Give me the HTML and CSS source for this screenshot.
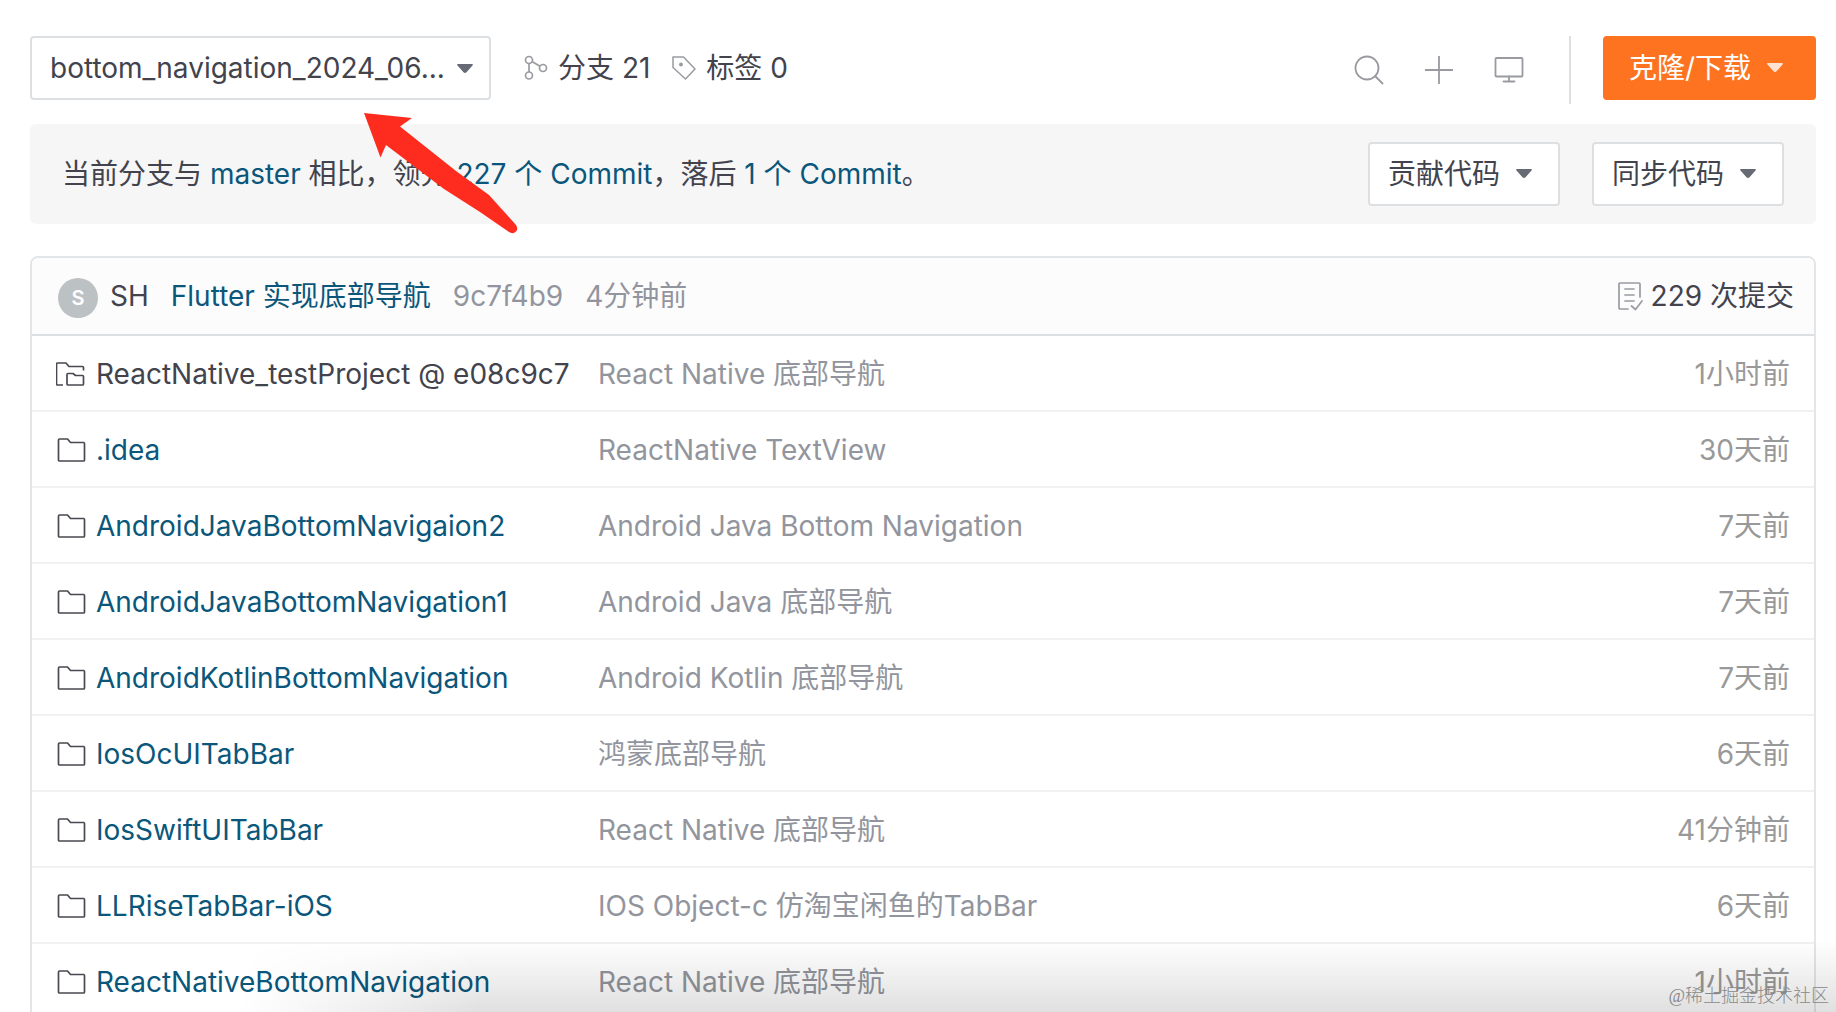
FILE: index.html
```html
<!DOCTYPE html>
<html lang="zh-CN">
<head>
  <meta charset="UTF-8" />
  <title>bottom_navigation</title>
  <meta name="viewport" content="width=device-width, initial-scale=1.0" />
  <link rel="stylesheet" href="styles.css">
</head>
<body>
  <svg class="sprite" aria-hidden="true">
    <symbol id="folder" viewBox="0 0 30 28">
      <path d="M2.500 4q0-1 1-1h8l3 3.500h13q1 0 1 1v16.500q0 1-1 1h-24q-1 0-1-1z" fill="none" stroke="#474a52" stroke-width="1.700" stroke-linejoin="round" />
    </symbol>
    <symbol id="caret" viewBox="0 0 16 10">
      <path d="M1 0h14q1.500.3.5 1.600l-6 6.700q-1.500 1.400-3 0l-6-6.700q-1-1.300.5-1.600z" fill="currentColor" />
    </symbol>
  </svg>

  <main class="page">
    <header class="toolbar">
      <div class="branch">
        <select class="branch-select" aria-label="分支">
          <option>bottom_navigation_2024_06...</option>
        </select>
        <svg class="caret"><use href="#caret" /></svg>
      </div>
      <nav class="refs">
        <a href="#branches" class="ref">
          <svg class="ref-icon" viewBox="0 0 24 26" fill="none" stroke="#999ba1" stroke-width="1.700">
            <circle cx="5" cy="5" r="3.500" /><circle cx="5" cy="20.500" r="3.500" /><circle cx="19" cy="13" r="3.500" />
            <path d="M5 8.500v8.500M8 6.500l8 4.800" />
          </svg>
          分支 21
        </a>
        <a href="#tags" class="ref">
          <svg class="ref-icon" viewBox="0 0 24 26" fill="none" stroke="#999ba1" stroke-width="1.500" stroke-linejoin="round">
            <path d="M1 2h10.500l11.500 12-9.500 10L1 12.500z" /><circle cx="9" cy="9.500" r="1.200" fill="#999ba1" />
          </svg>
          标签 0
        </a>
      </nav>
      <div class="actions">
        <button class="icon-btn" aria-label="搜索">
          <svg viewBox="0 0 30 30" fill="none" stroke="#999ba1" stroke-width="1.800" stroke-linecap="round"><circle cx="13" cy="13" r="11.500" /><path d="M21 21l7.500 7.500" /></svg>
        </button>
        <button class="icon-btn" aria-label="新建">
          <svg viewBox="0 0 30 30" fill="none" stroke="#999ba1" stroke-width="1.800"><path d="M1 15h28M15 1v28" /></svg>
        </button>
        <button class="icon-btn" aria-label="Web IDE">
          <svg viewBox="0 0 30 30" fill="none" stroke="#999ba1" stroke-width="1.800" stroke-linecap="round"><rect x="1.500" y="3" width="27" height="18.500" rx="1" /><path d="M15 21.500v4.500M9.500 26.500h11" /></svg>
        </button>
      </div>
      <button class="btn btn-orange">克隆/下载 <svg class="caret"><use href="#caret" /></svg></button>
    </header>

    <section class="compare">
      <p>当前分支与 <a href="#master">master</a> 相比，领先 <a href="#ahead">227 个 Commit</a>，落后 <a href="#behind">1 个 Commit</a>。</p>
      <div class="compare-actions">
        <button class="btn">贡献代码 <svg class="caret"><use href="#caret" /></svg></button>
        <button class="btn">同步代码 <svg class="caret"><use href="#caret" /></svg></button>
      </div>
    </section>

    <section class="files">
      <div class="last-commit">
        <span class="avatar">S</span>
        <span class="author">SH</span>
        <a href="#commit" class="message">Flutter 实现底部导航</a>
        <span class="muted">9c7f4b9</span>
        <span class="muted">4分钟前</span>
        <a href="#commits" class="commits">
          <svg class="log-icon" viewBox="0 0 26 30" fill="none" stroke="#999ba1" stroke-width="1.700" stroke-linecap="round" stroke-linejoin="round">
            <path d="M11 28H3q-1 0-1-1V3q0-1 1-1h19q1 0 1 1v13M8 8h9M8 14h9M8 20h9M14.500 25l4 3.500 6.500-8.500" />
          </svg>
          229 次提交
        </a>
      </div>
      <table class="tree">
        <tbody>
          <tr>
            <td class="name"><div>
              <svg class="icon" viewBox="0 0 30 28" fill="none" stroke="#474a52" stroke-width="1.700" stroke-linejoin="round">
                <path d="M7 25H1.500q-1 0-1-1V4q0-1 1-1h8.500l3 3.500h13.500q1 0 1 1v3M11 14.500q0-1 1-1h5l2.500 2h7q1 0 1 1v7.500q0 1-1 1H12q-1 0-1-1z" />
              </svg>
              <span>ReactNative_testProject @ e08c9c7</span></div></td>
            <td>React Native 底部导航</td>
            <td class="time">1小时前</td>
          </tr>
          <tr>
            <td class="name"><div><svg class="icon"><use href="#folder" /></svg><a href="#f1">.idea</a></div></td>
            <td>ReactNative TextView</td>
            <td class="time">30天前</td>
          </tr>
          <tr>
            <td class="name"><div><svg class="icon"><use href="#folder" /></svg><a href="#f2">AndroidJavaBottomNavigaion2</a></div></td>
            <td>Android Java Bottom Navigation</td>
            <td class="time">7天前</td>
          </tr>
          <tr>
            <td class="name"><div><svg class="icon"><use href="#folder" /></svg><a href="#f3">AndroidJavaBottomNavigation1</a></div></td>
            <td>Android Java 底部导航</td>
            <td class="time">7天前</td>
          </tr>
          <tr>
            <td class="name"><div><svg class="icon"><use href="#folder" /></svg><a href="#f4">AndroidKotlinBottomNavigation</a></div></td>
            <td>Android Kotlin 底部导航</td>
            <td class="time">7天前</td>
          </tr>
          <tr>
            <td class="name"><div><svg class="icon"><use href="#folder" /></svg><a href="#f5">IosOcUITabBar</a></div></td>
            <td>鸿蒙底部导航</td>
            <td class="time">6天前</td>
          </tr>
          <tr>
            <td class="name"><div><svg class="icon"><use href="#folder" /></svg><a href="#f6">IosSwiftUITabBar</a></div></td>
            <td>React Native 底部导航</td>
            <td class="time">41分钟前</td>
          </tr>
          <tr>
            <td class="name"><div><svg class="icon"><use href="#folder" /></svg><a href="#f7">LLRiseTabBar-iOS</a></div></td>
            <td>IOS Object-c 仿淘宝闲鱼的TabBar</td>
            <td class="time">6天前</td>
          </tr>
          <tr>
            <td class="name"><div><svg class="icon"><use href="#folder" /></svg><a href="#f8">ReactNativeBottomNavigation</a></div></td>
            <td>React Native 底部导航</td>
            <td class="time">1小时前</td>
          </tr>
        </tbody>
      </table>
    </section>

    <!-- red pointer to the branch selector -->
    <svg class="pointer" viewBox="0 0 154 122" aria-hidden="true">
      <path d="M0 0l48 5-12 8.500L92 58l33 24 27 30q2.500 4 0 6.500-3 3-7 .5L116 99 80 76 22 32l-5.500 12.500z" fill="#fe2c1e" />
    </svg>
    <div class="shade"></div>
    <div class="watermark">@稀土掘金技术社区</div>
  </main>
</body>
</html>
```

FILE: styles.css
```css
* {
  box-sizing: border-box;
  margin: 0;
  padding: 0;
}

body {
  font-family: Inter, "Noto Sans CJK SC", sans-serif;
  font-size: 28px;
  line-height: 40px;
  color: #42434d;
  background: #fff;
}

a {
  color: #0a577b;
  text-decoration: none;
}

button,
select {
  font: inherit;
  color: inherit;
  cursor: pointer;
}

.sprite {
  position: absolute;
  width: 0;
  height: 0;
}

.page {
  position: relative;
  height: 100vh;
  overflow: hidden;
  padding: 36px 20px 0 30px;
}

.toolbar {
  display: flex;
  align-items: center;
  height: 64px;
  margin-bottom: 24px;
}

.branch {
  position: relative;
}

.branch-select {
  appearance: none;
  width: 461px;
  height: 64px;
  padding: 0 32px 0 18px;
  border: 2px solid #dde0e2;
  border-radius: 4px;
  background: #fff;
}

.caret {
  width: 16px;
  height: 10px;
  flex: none;
  color: #666a74;
}

.branch .caret {
  position: absolute;
  right: 18px;
  top: 28px;
  pointer-events: none;
}

.refs {
  display: flex;
  gap: 22px;
  margin-left: 33px;
}

.ref {
  display: flex;
  align-items: center;
  gap: 10px;
  color: #42434d;
}

.ref-icon {
  width: 24px;
  height: 26px;
}

.actions {
  display: flex;
  align-items: center;
  align-self: flex-start;
  gap: 40px;
  height: 68px;
  margin-left: auto;
  margin-right: 32px;
  padding-right: 45px;
  border-right: 2px solid #dde0e2;
}

.icon-btn {
  width: 30px;
  height: 30px;
  border: 0;
  background: none;
}

.icon-btn svg {
  display: block;
}

.btn {
  display: flex;
  align-items: center;
  gap: 16px;
  height: 64px;
  padding: 0 26px 0 18px;
  border: 2px solid #dde0e2;
  border-radius: 4px;
  background: #fff;
}

.btn-orange {
  padding: 0 31px 0 24px;
  border-color: #fe7320;
  background: #fe7320;
  color: #fff;
}

.btn-orange .caret {
  color: #ffe3d2;
}

.compare {
  display: flex;
  align-items: center;
  justify-content: space-between;
  height: 100px;
  padding: 0 32px;
  margin-bottom: 32px;
  border-radius: 6px;
  background: #f6f6f6;
}

.compare-actions {
  display: flex;
  gap: 32px;
}

.files {
  border: 2px solid #e3e6e8;
  border-radius: 8px;
}

.last-commit {
  display: flex;
  align-items: center;
  height: 78px;
  padding: 0 20px 0 26px;
  border-bottom: 2px solid #dde0e2;
  border-radius: 6px 6px 0 0;
  background: #fcfcfd;
}

.avatar {
  width: 40px;
  height: 40px;
  margin-top: 4px;
  margin-right: 12px;
  border-radius: 50%;
  background: #bcc1c4;
  color: #fff;
  font-size: 20px;
  font-weight: 600;
  text-align: center;
}

.message {
  margin: 0 22px;
}

.muted {
  margin-right: 22px;
  color: #92959d;
}

.commits {
  display: flex;
  align-items: center;
  gap: 8px;
  margin-left: auto;
  color: #42434d;
}

.log-icon {
  width: 26px;
  height: 30px;
}

.tree {
  width: 100%;
  border-spacing: 0;
}

.tree td {
  height: 76px;
  padding-top: 2px;
  border-bottom: 2px solid #f0f1f2;
  color: #92959d;
  white-space: nowrap;
}

.tree .name {
  width: 566px;
  padding-left: 24px;
  color: #42434d;
}

.name div {
  display: flex;
  align-items: center;
  gap: 10px;
}

.icon {
  width: 30px;
  height: 28px;
}

.tree .time {
  padding-right: 24px;
  color: #999;
  text-align: right;
}

.pointer {
  position: absolute;
  left: 364px;
  top: 113px;
  width: 154px;
  height: 122px;
}

.shade {
  position: absolute;
  left: 240px;
  right: 0;
  bottom: 0;
  height: 72px;
  background: linear-gradient(rgba(0, 0, 0, 0), rgba(0, 0, 0, 0.12));
  mask-image: linear-gradient(90deg, transparent, #000 240px);
}

.watermark {
  position: absolute;
  right: 7px;
  bottom: 4px;
  font-family: "Liberation Serif", "Noto Sans CJK SC", serif;
  font-size: 18px;
  font-weight: 300;
  line-height: 24px;
  color: #888;
}
```
